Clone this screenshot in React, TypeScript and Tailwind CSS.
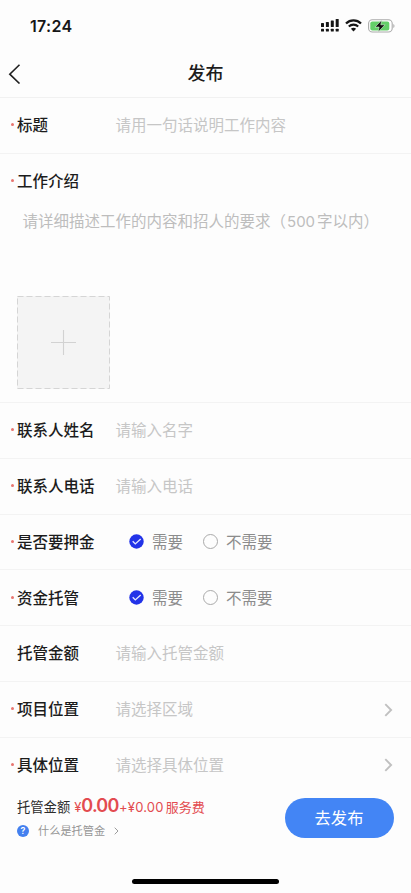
import type { ReactNode } from "react";

function StatusBar() {
  return (
    <div className="flex h-[50px] items-center justify-between pl-[30px] pr-[16px] pt-px">
      <span className="text-[16px] font-semibold leading-5 tracking-[0.3px] text-[#161616]">17:24</span>
      <div className="flex items-center">
        <svg width="18" height="13" viewBox="0 0 18 13" fill="#151515">
          <rect x="0" y="4" width="3" height="4" rx="0.6" />
          <rect x="4.9" y="3" width="3" height="5" rx="0.6" />
          <rect x="9.8" y="1.5" width="3" height="6.5" rx="0.6" />
          <rect x="14.7" y="0" width="3" height="8" rx="0.6" />
          <rect x="0" y="9.7" width="3" height="2.8" rx="0.6" />
          <rect x="4.9" y="9.7" width="3" height="2.8" rx="0.6" />
          <rect x="9.8" y="9.7" width="3" height="2.8" rx="0.6" />
          <rect x="14.7" y="9.7" width="3" height="2.8" rx="0.6" />
        </svg>
        <svg className="ml-[6px]" width="17" height="13" viewBox="0 0 17 13" fill="none" stroke="#151515">
          <path d="M1 4.5C5.2 0.4 11.8 0.4 16 4.5" strokeWidth="2.3" />
          <path d="M3.8 7.5C6.5 5 10.5 5 13.2 7.5" strokeWidth="2.1" />
          <path d="M8.5 12.4L5.9 9.8C7.3 8.5 9.7 8.5 11.1 9.8Z" fill="#151515" stroke="none" />
        </svg>
        <svg className="ml-[6px]" width="27" height="14" viewBox="0 0 27 14">
          <rect x="0.6" y="0.8" width="23.6" height="12.2" rx="3.8" fill="#fff" stroke="#aaa" strokeWidth="1.1" />
          <rect x="2.3" y="2.4" width="19" height="9" rx="2" fill="#64cf69" />
          <path d="M25.3 4.9C26.9 5.5 26.9 8.4 25.3 9Z" fill="#aaa" />
          <path d="M13.6 1.2L7 8.1H11.1L10.2 12.9L17 5.8H12.8Z" fill="#111" stroke="#d8f5d8" strokeWidth="0.6" />
        </svg>
      </div>
    </div>
  );
}

function Label({ text, required = true }: { text: string; required?: boolean }) {
  return (
    <div className="flex w-[115.5px] shrink-0 items-center pl-[11px]">
      <span className="w-[6px]">
        {required && <span className="mb-[3px] block size-[3px] rounded-full bg-[#e87570]" />}
      </span>
      <span className="whitespace-nowrap text-[15.5px] font-medium leading-6 text-[#1c1c1c]">{text}</span>
    </div>
  );
}

function Row({ label, required, children }: { label: string; required?: boolean; children: ReactNode }) {
  return (
    <div className="flex h-[55.85px] items-center border-b border-[#f3f3f3] pt-[1.5px]">
      <Label text={label} required={required} />
      {children}
    </div>
  );
}

function Placeholder({ children }: { children: ReactNode }) {
  return <span className="text-[15.5px] leading-6 text-[#c6c6c6]">{children}</span>;
}

function Arrow() {
  return (
    <svg className="mb-px ml-auto mr-[18px]" width="9" height="14" viewBox="0 0 9 14" fill="none" stroke="#c0c0c0" strokeWidth="1.9">
      <path d="M1.3 1.2L7.1 7L1.3 12.8" />
    </svg>
  );
}

function Choice() {
  return (
    <div className="flex items-center pl-[13px] text-[15.5px] leading-6 text-[#8c8c8c]">
      <svg className="mb-[2px]" width="15" height="15" viewBox="0 0 15 15">
        <circle cx="7.5" cy="7.5" r="7.2" fill="#2233e8" />
        <path d="M3.7 7.3L6.3 9.9L11.7 4.9" fill="none" stroke="#e2e6ff" strokeWidth="1.4" />
      </svg>
      <span className="ml-[8.5px]">需要</span>
      <span className="mb-[2px] ml-[19.5px] size-[15px] rounded-full border border-[#aaa]" />
      <span className="ml-[8.5px]">不需要</span>
    </div>
  );
}

export default function App() {
  return (
    <div className="flex h-[893px] w-[411px] flex-col overflow-hidden bg-[#fdfdfd] font-['Inter','Noto_Sans_CJK_SC',sans-serif]">
      <StatusBar />
      <header className="grid h-[48px] grid-cols-[1fr_auto_1fr] items-center border-b border-[#f1f1f1]">
        <svg className="ml-[8px]" width="13" height="20" viewBox="0 0 13 20" fill="none" stroke="#202020" strokeWidth="1.6">
          <path d="M11.5 0.7L1.8 10.2L11.5 19.5" />
        </svg>
        <h1 className="pt-px text-[18px] font-medium leading-7 text-[#1c1c1c]">发布</h1>
      </header>

      <Row label="标题"><Placeholder>请用一句话说明工作内容</Placeholder></Row>
      <section className="flex h-[249px] flex-col border-b border-[#f3f3f3]">
        <div className="flex h-[56px] items-center pt-px"><Label text="工作介绍" /></div>
        <p className="whitespace-nowrap pl-[22.5px] text-[15.5px] leading-6 text-[#bdbdbd]">
          请详细描述工作的内容和招人的要求（<span className="ml-px mr-[2px] text-[15px]">500</span>字以内）
        </p>
        <div className="ml-[16.5px] mt-[62px] flex size-[93px] items-center justify-center bg-[#f4f4f4]">
          <svg width="93" height="93" viewBox="0 0 93 93" fill="none">
            <rect x="0.5" y="0.5" width="92" height="92" stroke="#d5d5d5" strokeDasharray="6 3" />
            <path d="M34 46.5H59M46.5 34V59" stroke="#d2d2d2" strokeWidth="1.1" />
          </svg>
        </div>
      </section>
      <Row label="联系人姓名"><Placeholder>请输入名字</Placeholder></Row>
      <Row label="联系人电话"><Placeholder>请输入电话</Placeholder></Row>
      <Row label="是否要押金"><Choice /></Row>
      <Row label="资金托管"><Choice /></Row>
      <Row label="托管金额" required={false}><Placeholder>请输入托管金额</Placeholder></Row>
      <Row label="项目位置"><Placeholder>请选择区域</Placeholder><Arrow /></Row>
      <div className="flex h-[54px] items-center pt-[2px]">
        <Label text="具体位置" />
        <Placeholder>请选择具体位置</Placeholder>
        <Arrow />
      </div>

      <footer className="flex h-[80px] items-start justify-between pl-[17px] pr-[17px]">
        <div className="pt-[2px]">
          <div className="flex h-[24px] items-baseline whitespace-nowrap text-[13px] leading-6 text-[#e34b50]">
            <span className="mr-[4px] text-[13.3px] text-[#2b2b2b]">托管金额</span>
            <span>¥</span>
            <span className="text-[18px] font-semibold tracking-[-0.8px]">0.00</span>
            <span className="ml-[0.5px] tracking-[0.2px]">+¥0.00</span>
            <span className="ml-[2px]">服务费</span>
          </div>
          <div className="flex h-[24px] items-center pt-[2px] text-[11.2px] leading-5 text-[#969696]">
            <span className="mr-[9px] flex size-[12px] items-center justify-center rounded-full bg-[#4380ef] text-[9px] font-semibold text-white">?</span>
            <span>什么是托管金</span>
            <svg className="ml-[9px]" width="5" height="8" viewBox="0 0 5 8" fill="none" stroke="#9c9c9c">
              <path d="M0.7 0.7L4 4L0.7 7.3" />
            </svg>
          </div>
        </div>
        <button className="mt-[6px] h-[40px] w-[109px] rounded-full bg-[#4385f5] pr-[7px] pl-[6px] pt-px text-[16.3px] text-white">去发布</button>
      </footer>
      <div className="mx-auto mt-[7px] h-[5px] w-[147px] rounded-full bg-black" />
    </div>
  );
}
